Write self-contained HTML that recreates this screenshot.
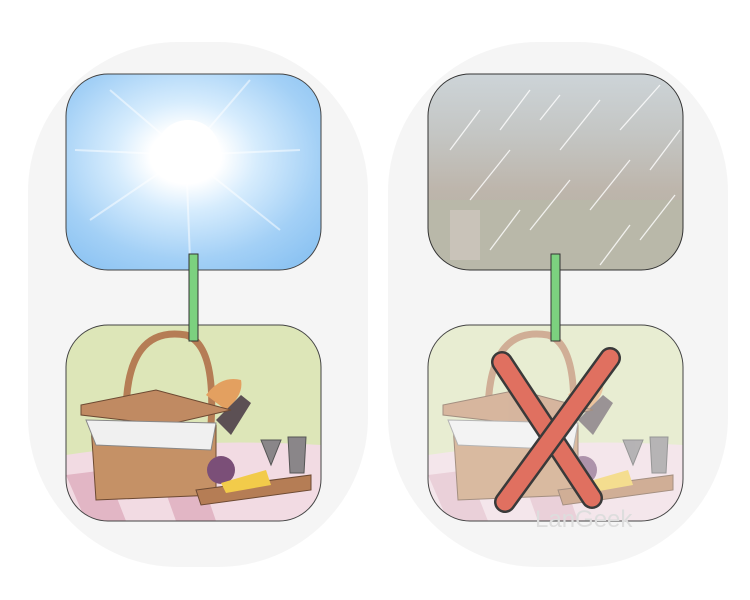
<!DOCTYPE html>
<html><head><meta charset="utf-8"><style>
html,body{margin:0;padding:0;background:#fff;width:750px;height:600px;overflow:hidden}
</style></head><body>
<svg width="750" height="600" viewBox="0 0 750 600" xmlns="http://www.w3.org/2000/svg">
<defs>
<radialGradient id="sun" cx="0.47" cy="0.42" r="0.7">
<stop offset="0" stop-color="#fff"/><stop offset="0.2" stop-color="#fff"/>
<stop offset="0.4" stop-color="#d6ecfd"/><stop offset="0.75" stop-color="#a3d0f6"/><stop offset="1" stop-color="#8cc3f2"/></radialGradient>
<linearGradient id="rain" x1="0" y1="0" x2="0" y2="1">
<stop offset="0" stop-color="#cdd4d8"/><stop offset="0.3" stop-color="#c4c6c4"/><stop offset="0.6" stop-color="#bdb5ab"/><stop offset="1" stop-color="#aeb1a6"/></linearGradient>
<clipPath id="c1"><rect x="66" y="74" width="255" height="196" rx="42"/></clipPath>
<clipPath id="c2"><rect x="428" y="74" width="255" height="196" rx="42"/></clipPath>
<clipPath id="c3"><rect x="66" y="325" width="255" height="196" rx="42"/></clipPath>
<clipPath id="c4"><rect x="428" y="325" width="255" height="196" rx="42"/></clipPath>
<g id="pic">
<rect x="0" y="0" width="255" height="196" fill="#dde6b8"/>
<path d="M0 130 Q120 112 255 120 L255 196 L0 196Z" fill="#f2dbe3"/>
<path d="M0 150 L40 145 L60 196 L20 196Z M90 140 L130 138 L150 196 L110 196Z" fill="#e2b6c5"/>
<path d="M60 90 Q60 0 120 10 Q150 20 145 100" fill="none" stroke="#b57d55" stroke-width="7"/>
<path d="M140 70 Q155 50 175 55 Q178 70 160 85Z" fill="#e3a060"/>
<path d="M150 95 L175 70 L185 78 L165 110Z" fill="#5c5054"/>
<path d="M25 100 L150 100 L150 170 L30 175Z" fill="#c59166" stroke="#6d4a33"/>
<path d="M15 80 L90 65 L165 85 L100 100 L15 90Z" fill="#c08a62" stroke="#6d4a33"/>
<path d="M20 95 L150 98 L145 125 L30 120Z" fill="#f0f0f0" stroke="#888"/>
<circle cx="155" cy="145" r="14" fill="#7b4f78"/>
<path d="M130 165 L245 150 L245 165 L135 180Z" fill="#b57d55" stroke="#6d4a33"/>
<path d="M155 158 L200 145 L205 160 L160 168Z" fill="#f2cb4a"/>
<path d="M195 115 L215 115 L205 140Z M222 112 L240 112 L238 148 L224 148Z" fill="#8a8689" stroke="#555"/>
</g>
</defs>
<rect width="750" height="600" fill="#fff"/>
<rect x="28" y="42" width="340" height="525" rx="150" fill="#f5f5f5"/>
<rect x="388" y="42" width="340" height="525" rx="150" fill="#f5f5f5"/>
<g clip-path="url(#c1)"><rect x="66" y="74" width="255" height="196" fill="url(#sun)"/>
<g stroke="#fff" stroke-opacity="0.5" stroke-width="2">
<line x1="186" y1="155" x2="110" y2="90"/><line x1="186" y1="155" x2="250" y2="80"/><line x1="186" y1="155" x2="90" y2="220"/><line x1="186" y1="155" x2="280" y2="230"/><line x1="186" y1="155" x2="190" y2="260"/><line x1="186" y1="155" x2="300" y2="150"/><line x1="186" y1="155" x2="75" y2="150"/></g>
<circle cx="188" cy="152" r="32" fill="#fff"/></g>
<rect x="66" y="74" width="255" height="196" rx="42" fill="none" stroke="#444" stroke-width="1"/>
<g clip-path="url(#c2)"><rect x="428" y="74" width="255" height="196" fill="url(#rain)"/>
<rect x="428" y="200" width="255" height="70" fill="#b9b8a9"/>
<rect x="450" y="210" width="30" height="50" fill="#c9c3b9"/>
<g stroke="#fff" stroke-opacity="0.8" stroke-width="1.3">
<line x1="450" y1="150" x2="480" y2="110"/><line x1="470" y1="200" x2="510" y2="150"/><line x1="500" y1="130" x2="530" y2="90"/><line x1="530" y1="230" x2="570" y2="180"/><line x1="560" y1="150" x2="600" y2="100"/><line x1="590" y1="210" x2="630" y2="160"/><line x1="620" y1="130" x2="660" y2="85"/><line x1="640" y1="240" x2="675" y2="195"/><line x1="490" y1="250" x2="520" y2="210"/><line x1="600" y1="265" x2="630" y2="225"/><line x1="540" y1="120" x2="560" y2="95"/><line x1="650" y1="170" x2="680" y2="130"/></g></g>
<rect x="428" y="74" width="255" height="196" rx="42" fill="none" stroke="#333" stroke-width="1"/>
<g clip-path="url(#c3)"><use href="#pic" transform="translate(66,325)"/></g>
<rect x="66" y="325" width="255" height="196" rx="42" fill="none" stroke="#444" stroke-width="1"/>
<g clip-path="url(#c4)"><g opacity="0.7"><use href="#pic" transform="translate(428,325)"/></g>
<rect x="428" y="325" width="255" height="196" fill="#fff" opacity="0.15"/>
<path d="M502 362 L592 498" stroke="#3a3a3a" stroke-width="22" stroke-linecap="round"/>
<path d="M502 362 L592 498" stroke="#e07060" stroke-width="17" stroke-linecap="round"/>
<path d="M610 358 L505 502" stroke="#3a3a3a" stroke-width="22" stroke-linecap="round"/>
<path d="M610 358 L505 502" stroke="#e07060" stroke-width="17" stroke-linecap="round"/>
</g>
<rect x="428" y="325" width="255" height="196" rx="42" fill="none" stroke="#444" stroke-width="1"/>
<text x="535" y="527" font-family="Liberation Sans, sans-serif" font-size="24" fill="#ddd">LanGeek</text>
<rect x="189" y="254" width="9" height="87" fill="#7cd17f" stroke="#333" stroke-width="1"/>
<rect x="551" y="254" width="9" height="87" fill="#7cd17f" stroke="#333" stroke-width="1"/>
</svg>
</body></html>
